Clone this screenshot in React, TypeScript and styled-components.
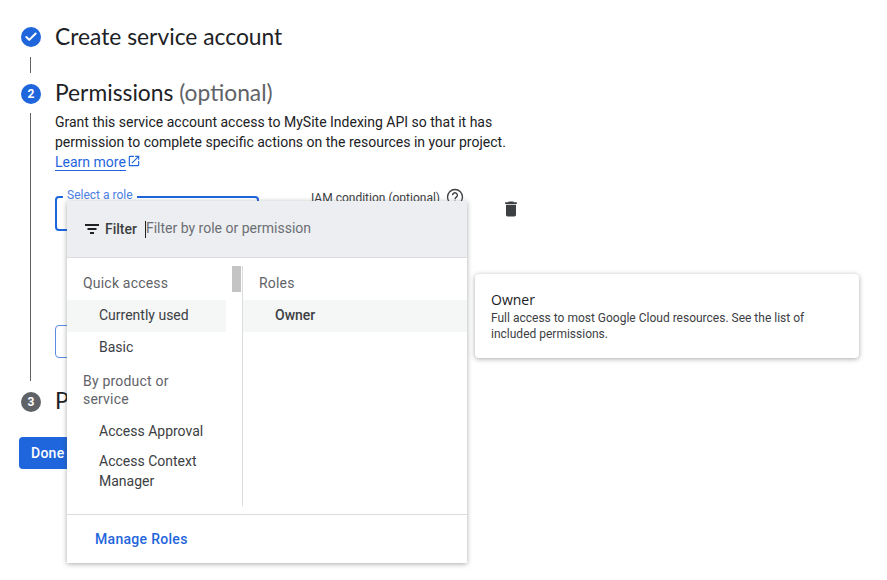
import styled, { createGlobalStyle } from 'styled-components'
import { Check } from 'lucide-react'

const quickAccess = ['Currently used', 'Basic']
const products = ['Access Approval', 'Access Context Manager', 'Actions']

function App() {
    return (
        <>
            <GlobalStyle />
            <Page>
                <StepRow>
                    <StepBadge>
                        <Check size={14} strokeWidth={3.4} color="#fff" />
                    </StepBadge>
                    <StepTitle $low>Create service account</StepTitle>
                </StepRow>
                <Connector />
                <StepRow>
                    <StepBadge>2</StepBadge>
                    <StepTitle>
                        Permissions <Optional>(optional)</Optional>
                    </StepTitle>
                </StepRow>
                <StepBody>
                    <Description>
                        Grant this service account access to MySite Indexing API so that it has
                        <br />
                        permission to complete specific actions on the resources in your project.
                        <br />
                        <LearnMore>Learn more</LearnMore>
                        <LinkIcon viewBox="0 0 24 24">
                            <path d="M19 19H5V5h7V3H5a2 2 0 0 0-2 2v14a2 2 0 0 0 2 2h14c1.1 0 2-.9 2-2v-7h-2v7zM14 3v2h3.59l-9.83 9.83 1.41 1.41L19 6.41V10h2V3h-7z" fill="#1f66dc" />
                        </LinkIcon>
                    </Description>
                    <RoleRow>
                        <RoleField>
                            <RoleLabel>Select a role</RoleLabel>
                        </RoleField>
                        <ConditionLabel>IAM condition (optional)</ConditionLabel>
                        <HelpIcon viewBox="0 0 24 24">
                            <circle cx="12" cy="12" r="10" fill="none" stroke="#3c4043" strokeWidth="1.8" />
                            <path d="M8.8 9.6a3.2 3.2 0 1 1 5 2.6c-1.1.8-1.8 1.3-1.8 2.8" fill="none" stroke="#3c4043" strokeWidth="1.8" />
                            <circle cx="12" cy="17.6" r="1.1" fill="#3c4043" />
                        </HelpIcon>
                        <TrashIcon viewBox="0 0 24 24">
                            <path d="M6 19c0 1.1.9 2 2 2h8c1.1 0 2-.9 2-2V7H6v12zM19 4h-3.5l-1-1h-5l-1 1H5v2h14V4z" fill="#3c4043" />
                        </TrashIcon>
                    </RoleRow>
                    <AddButton />
                </StepBody>
                <LastStepRow>
                    <StepBadge $muted>3</StepBadge>
                    <StepTitle>Principals with access</StepTitle>
                </LastStepRow>
                <DoneButton>Done</DoneButton>

                <RoleMenu>
                    <FilterBar>
                        <FilterIcon viewBox="0 0 14 10">
                            <path d="M0 0h14v2H0zM2.5 4h9v2h-9zM5 8h4v2H5z" fill="#202124" />
                        </FilterIcon>
                        <FilterLabel>Filter</FilterLabel>
                        <Caret />
                        <FilterHint>Filter by role or permission</FilterHint>
                    </FilterBar>
                    <Columns>
                        <CategoryColumn>
                            <ScrollThumb />
                            <ColumnHeading>Quick access</ColumnHeading>
                            {quickAccess.map((item, i) => (
                                <CategoryItem key={item} $active={i === 0}>{item}</CategoryItem>
                            ))}
                            <ProductHeading>By product or service</ProductHeading>
                            {products.map((item) => (
                                <ProductItem key={item}>{item}</ProductItem>
                            ))}
                        </CategoryColumn>
                        <RolesColumn>
                            <RolesHeading>Roles</RolesHeading>
                            <RoleItem>Owner</RoleItem>
                        </RolesColumn>
                    </Columns>
                    <MenuFooter>
                        <ManageRoles>Manage Roles</ManageRoles>
                    </MenuFooter>
                </RoleMenu>

                <RoleTooltip>
                    <TooltipTitle>Owner</TooltipTitle>
                    <TooltipText>
                        Full access to most Google Cloud resources. See the list of included permissions.
                    </TooltipText>
                </RoleTooltip>
            </Page>
        </>
    )
}

export default App

const GlobalStyle = createGlobalStyle`
    html, body {
        margin: 0;
        height: 100%;
        background: #fff;
        overflow: hidden;
    }
    body {
        font-family: Roboto, "Liberation Sans", sans-serif;
        color: #202124;
    }
`

const Page = styled.div`
    position: relative;
    width: 887px;
    height: 580px;
    padding: 21px 0 0 21px;
    box-sizing: border-box;
    overflow: hidden;
`

const StepRow = styled.div`
    display: flex;
    align-items: center;
    gap: 14px;
    height: 32px;
`

const LastStepRow = styled(StepRow)`
    margin-top: 5px;
`

const StepBadge = styled.div<{ $muted?: boolean }>`
    display: flex;
    align-items: center;
    justify-content: center;
    flex: none;
    width: 20px;
    height: 20px;
    border-radius: 50%;
    background: ${(p) => (p.$muted ? '#5f6368' : '#1f66dc')};
    color: #fff;
    font-size: 12px;
    font-weight: 700;
`

const StepTitle = styled.div<{ $low?: boolean }>`
    padding-bottom: ${(p) => (p.$low ? '1px' : '3px')};
    font-family: Lato, sans-serif;
    font-size: 22.8px;
    line-height: 29px;
    color: #202124;
    white-space: nowrap;
`

const Optional = styled.span`
    color: #5f6368;
`

const Connector = styled.div`
    width: 1px;
    height: 16px;
    margin: 4px 0 5px 9px;
    background: #5f6368;
`

const StepBody = styled.div`
    display: flow-root;
    width: 700px;
    height: 268px;
    margin: 3px 0 0 9px;
    padding-left: 24px;
    border-left: 1px solid #5f6368;
    box-sizing: border-box;
`

const Description = styled.div`
    margin-top: -1px;
    font-size: 14px;
    line-height: 20px;
    color: #202124;
    white-space: nowrap;
`

const LearnMore = styled.span`
    color: #1f66dc;
    border-bottom: 1px solid #1f66dc;
`

const LinkIcon = styled.svg`
    width: 14px;
    height: 14px;
    margin-left: 1px;
    vertical-align: -1px;
`

const RoleRow = styled.div`
    display: flex;
    align-items: flex-start;
    margin-top: 24px;
    height: 35px;
`

const RoleField = styled.div`
    position: relative;
    width: 204px;
    height: 35px;
    border: 2px solid #1f66dc;
    border-radius: 4px;
    box-sizing: border-box;
`

const RoleLabel = styled.span`
    position: absolute;
    top: -10px;
    left: 6px;
    padding: 0 4px;
    background: #fff;
    font-size: 12px;
    line-height: 14px;
    color: #4a80e3;
`

const ConditionLabel = styled.span`
    margin-left: 52px;
    font-size: 12px;
    line-height: 15px;
    margin-top: -5px;
    color: #3c4043;
`

const HelpIcon = styled.svg`
    width: 18px;
    height: 18px;
    margin: -8px 0 0 6px;
`

const TrashIcon = styled.svg`
    width: 20px;
    height: 20px;
    margin: 3px 0 0 37px;
`

const AddButton = styled.div`
    width: 120px;
    height: 33px;
    margin-top: 94px;
    border: 1px solid #5d8be0;
    border-radius: 4px;
    box-sizing: border-box;
`

const DoneButton = styled.button`
    display: block;
    width: 68px;
    height: 32px;
    margin: 19px 0 0 -2px;
    padding: 0 0 0 12px;
    border: 0;
    border-radius: 4px;
    background: #1f66dc;
    color: #fff;
    font-family: Roboto, sans-serif;
    font-size: 14px;
    font-weight: 500;
    letter-spacing: 0.25px;
    text-align: left;
`

const RoleMenu = styled.div`
    position: absolute;
    top: 201px;
    left: 67px;
    display: flex;
    flex-direction: column;
    width: 400px;
    height: 362px;
    background: #fff;
    box-shadow: 0 1px 5px rgba(60, 64, 67, 0.45);
`

const FilterBar = styled.div`
    display: flex;
    align-items: center;
    flex: none;
    height: 56px;
    padding-left: 18px;
    background: #edeef1;
    border-bottom: 1px solid #dadce0;
`

const FilterIcon = styled.svg`
    width: 14px;
    height: 10px;
`

const FilterLabel = styled.span`
    margin-left: 6px;
    font-size: 14px;
    font-weight: 500;
    color: #3c4043;
`

const Caret = styled.span`
    width: 1px;
    height: 17px;
    margin-left: 8px;
    background: #202124;
`

const FilterHint = styled.span`
    position: relative;
    top: -1px;
    font-size: 14px;
    color: #6b6f74;
`

const Columns = styled.div`
    display: flex;
    flex: none;
    height: 240px;
    margin: 8px 0;
`

const CategoryColumn = styled.div`
    position: relative;
    flex: none;
    width: 175px;
    height: 240px;
    overflow: hidden;
    border-right: 1px solid #dadce0;
`

const ColumnHeading = styled.div`
    padding: 0 16px;
    margin-top: 9px;
    height: 17px;
    font-size: 14px;
    line-height: 17px;
    letter-spacing: 0.2px;
    color: #5f6368;
    font-weight: 400;
`

const ProductHeading = styled(ColumnHeading)`
    width: 110px;
    height: 36px;
    margin: 8px 0 7px;
    line-height: 18px;
`

const CategoryItem = styled.div<{ $active?: boolean }>`
    width: 159px;
    height: 32px;
    margin-top: ${(p) => (p.$active ? '8px' : '0')};
    padding-left: 32px;
    box-sizing: border-box;
    background: ${(p) => (p.$active ? '#f5f6f6' : 'transparent')};
    font-size: 14px;
    line-height: 30px;
    color: #3c4043;
`

const ProductItem = styled.div`
    width: 145px;
    padding: 6px 0 4px 32px;
    font-size: 14px;
    line-height: 20px;
    color: #3c4043;
    &:last-of-type {
        padding-top: 8px;
    }
`

const ScrollThumb = styled.div`
    position: absolute;
    top: 0;
    right: 1px;
    width: 9px;
    height: 26px;
    background: #c4c4c4;
`

const RolesColumn = styled.div`
    flex: 1;
    min-width: 0;
`

const RolesHeading = styled(ColumnHeading)``

const RoleItem = styled.div`
    height: 32px;
    margin-top: 8px;
    padding-left: 32px;
    background: #f5f6f6;
    font-size: 14px;
    font-weight: 500;
    line-height: 30px;
    color: #3c4043;
`

const MenuFooter = styled.div`
    display: flex;
    align-items: center;
    flex: 1;
    padding-left: 28px;
    border-top: 1px solid #dadce0;
`

const ManageRoles = styled.span`
    font-size: 14px;
    font-weight: 500;
    letter-spacing: 0.3px;
    color: #1f66dc;
`

const RoleTooltip = styled.div`
    position: absolute;
    top: 274px;
    left: 475px;
    width: 384px;
    height: 84px;
    padding: 18px 16px 0;
    box-sizing: border-box;
    background: #fff;
    border-radius: 4px;
    box-shadow: 0 1px 5px rgba(60, 64, 67, 0.45);
`

const TooltipTitle = styled.div`
    font-family: "Open Sans", sans-serif;
    font-size: 14px;
    line-height: 16px;
    color: #202124;
`

const TooltipText = styled.div`
    width: 330px;
    margin-top: 2px;
    font-size: 12px;
    line-height: 16px;
    color: #3c4043;
`
